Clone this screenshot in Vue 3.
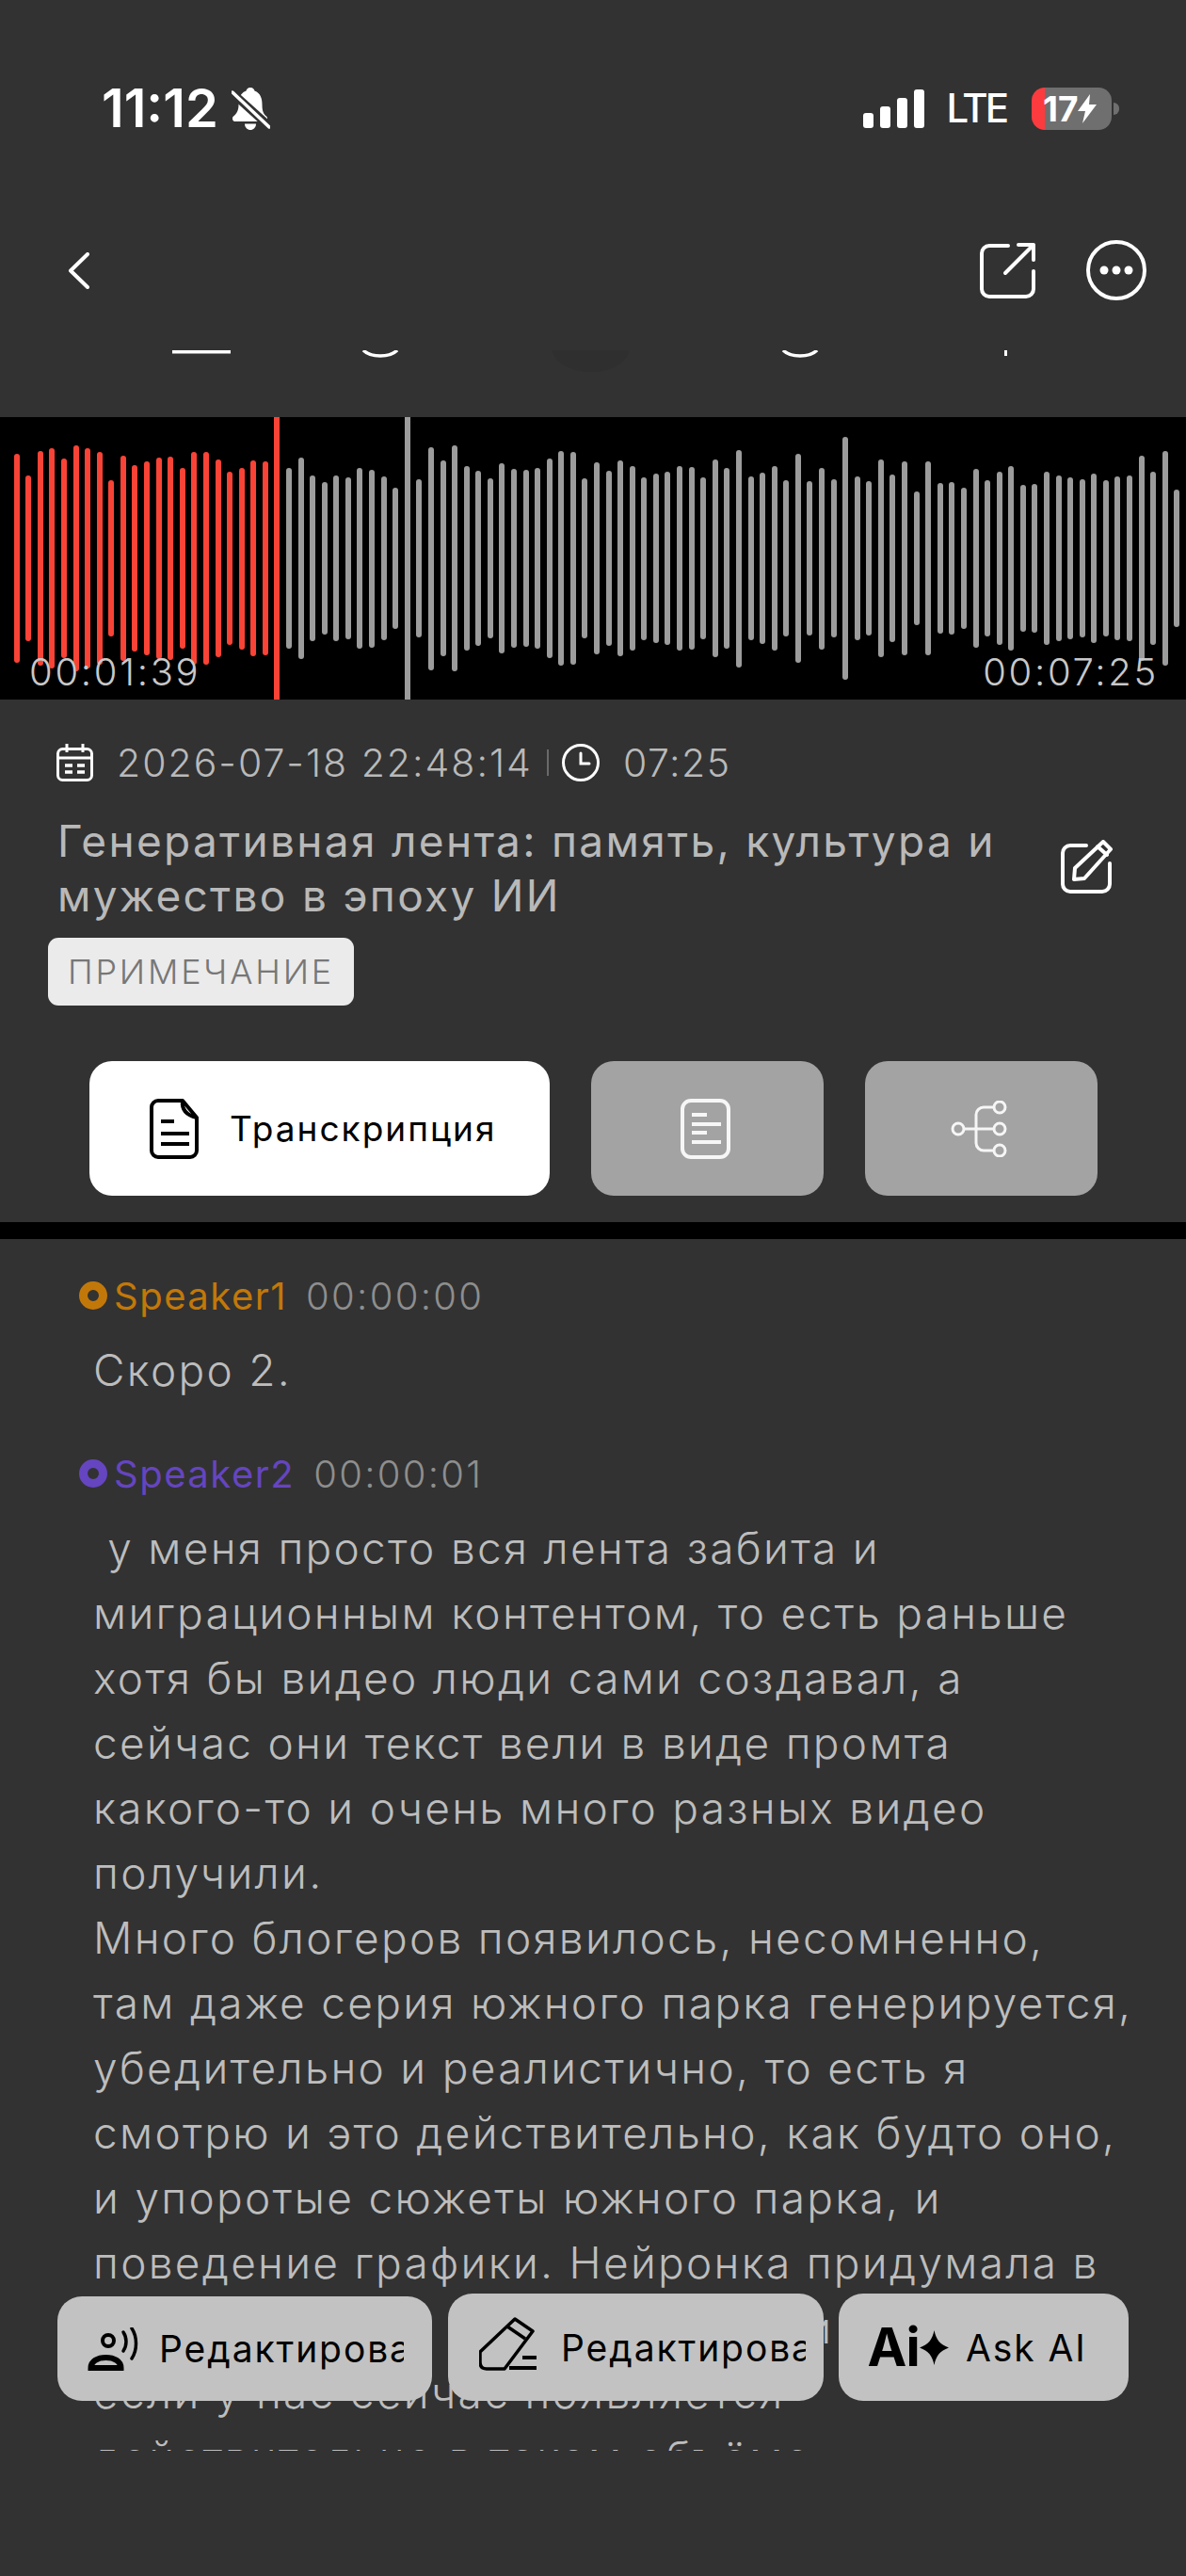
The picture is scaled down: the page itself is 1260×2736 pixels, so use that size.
<script setup>
// 波形データ（バーの高さ）
const played = [667,526,684,700,636,722,704,680,498,653,594,620,642,646,578,680,680,628,550,579,626,618]
const middle = [578,640,526,486,526,518,575,567,520,452]
const rest = [503,711,622,719,586,559,509,608,572,563,574,634,685,680,508,
  610,556,625,590,519,538,552,590,582,516,632,574,693,520,544,590,496,668,492,579,502,776,524,490,630,
  535,617,424,616,478,484,452,572,499,552,588,466,472,550,526,518,505,540,498,524,527,655,550,686,440]

const toBars = (list, kind) => list.map((h) => ({ h: h / 3, kind }))
const bars = [
  ...toBars(played, 'red'),
  { h: 300, kind: 'head' },
  ...toBars(middle, 'gray'),
  { h: 300, kind: 'line' },
  ...toBars(rest, 'gray')
]

const segments = [
  { name: 'Speaker1', time: '00:00:00', color: '#c27809', text: 'Скоро 2.' },
  {
    name: 'Speaker2',
    time: '00:00:01',
    color: '#6545c0',
    text: ` у меня просто вся лента забита и
миграционным контентом, то есть раньше
хотя бы видео люди сами создавал, а
сейчас они текст вели в виде промта
какого-то и очень много разных видео
получили.
Много блогеров появилось, несомненно,
там даже серия южного парка генерируется,
убедительно и реалистично, то есть я
смотрю и это действительно, как будто оно,
и упоротые сюжеты южного парка, и
поведение графики. Нейронка придумала в
в этом сюжете много всякого, и с
если у нас сейчас появляется
действительно в таком объёме`
  }
]
</script>

<template>
  <div class="screen">
    <header class="status">
      <div class="status-left">
        <span class="clock">11:12</span>
        <svg class="bell" viewBox="0 0 41 45">
          <path d="M20 0c-3 0-4 2-4.500 3.500C9 6 7.500 12 7.500 18c0 6-2 10-5.500 12.500C0 32 1 36 3.500 36h32c2.500 0 3.500-4 1.500-5.500C33.500 28 32.500 24 32.500 18c0-6-1.500-12-8-14.500C24 2 23 0 20 0z" fill="#fff"/>
          <path d="M14 38.500h12c0 4-3 6.500-6 6.500s-6-2.500-6-6.500z" fill="#fff"/>
          <path d="M0 5l41 37" stroke="#323232" stroke-width="9"/>
          <path d="M1 5l39 37" stroke="#fff" stroke-width="3.500" stroke-linecap="round"/>
        </svg>
      </div>
      <div class="status-right">
        <div class="signal">
          <i style="height: 16px"></i>
          <i style="height: 23px"></i>
          <i style="height: 32px"></i>
          <i style="height: 41px"></i>
        </div>
        <span class="lte">LTE</span>
        <div class="battery">
          <span>17</span>
          <svg viewBox="0 0 20 31" width="20" height="31">
            <path d="M13 0L0 18h8L5 31 20 11h-8z" fill="#fff"/>
          </svg>
        </div>
      </div>
    </header>

    <nav class="nav">
      <svg width="23" height="39" viewBox="0 0 23 39" fill="none" stroke="#fff" stroke-width="4" stroke-linecap="round" stroke-linejoin="round">
        <path d="M21 2L3 19.500 21 37"/>
      </svg>
      <div class="nav-actions">
        <svg width="60" height="61" viewBox="0 0 60 61" fill="none" stroke="#fff" stroke-width="4" stroke-linecap="round" stroke-linejoin="round">
          <path d="M30 4H10a8 8 0 0 0-8 8v38a8 8 0 0 0 8 8h39a8 8 0 0 0 8-8V31"/>
          <path d="M27 33L57 3M41 3h16v16"/>
        </svg>
        <svg width="64" height="64" viewBox="0 0 64 64">
          <circle cx="32" cy="32" r="30" fill="none" stroke="#fff" stroke-width="4"/>
          <circle cx="19" cy="32" r="4.500" fill="#fff"/>
          <circle cx="32" cy="32" r="4.500" fill="#fff"/>
          <circle cx="45" cy="32" r="4.500" fill="#fff"/>
        </svg>
      </div>
    </nav>

    <!-- スクロールで隠れたアイコンの端 -->
    <svg class="peek" viewBox="0 0 1260 71" width="1260" height="71">
      <path d="M586 0h83c-4 14-20 23-41 23s-38-9-42-23z" fill="#2f2f2f"/>
      <rect x="183" width="62" height="3.500" fill="#fff"/>
      <path d="M386 0c4 4 10 6 18 6s14-2 18-6" fill="none" stroke="#fff" stroke-width="3.500"/>
      <path d="M832 0c4 4 10 6 18 6s14-2 18-6" fill="none" stroke="#fff" stroke-width="3.500"/>
      <rect x="1067" width="3" height="6" fill="#fff"/>
    </svg>

    <section class="wave">
      <i
        v-for="(bar, index) in bars"
        :key="index"
        :class="bar.kind"
        :style="{ height: bar.h + 'px' }"
      ></i>
      <span class="wave-time left">00:01:39</span>
      <span class="wave-time right">00:07:25</span>
    </section>

    <div class="meta">
      <svg width="39" height="40" viewBox="0 0 39 40" fill="none" stroke="#fff" stroke-width="3">
        <rect x="1.500" y="5.500" width="36" height="33" rx="5"/>
        <path d="M2 15h35M11 0v9M28 0v9"/>
        <path d="M9 23h8M22 23h8M9 30h8M22 30h8" stroke-width="3.500"/>
      </svg>
      <span class="meta-date">2026-07-18 22:48:14</span>
      <i class="meta-sep"></i>
      <svg width="40" height="40" viewBox="0 0 40 40" fill="none" stroke="#fff" stroke-width="3" stroke-linecap="round">
        <circle cx="20" cy="20" r="18.500"/>
        <path d="M20 10v11h9"/>
      </svg>
      <span class="meta-dur">07:25</span>
    </div>

    <div class="title-row">
      <h1 class="title">Генеративная лента: память, культура и мужество в эпоху ИИ</h1>
      <svg class="edit" width="55" height="57" viewBox="0 0 55 57" fill="none" stroke="#fff" stroke-width="4" stroke-linecap="round" stroke-linejoin="round">
        <path d="M27 6H10a8 8 0 0 0-8 8v33a8 8 0 0 0 8 8h34a8 8 0 0 0 8-8V25"/>
        <path d="M15 30L45 2l8 8-28 31-11 1zM39 7l10 9"/>
      </svg>
    </div>

    <span class="chip">ПРИМЕЧАНИЕ</span>

    <div class="tabs">
      <button class="tab active">
        <svg width="52" height="64" viewBox="0 0 52 64" fill="none" stroke="#000" stroke-width="4" stroke-linejoin="round">
          <path d="M35 2H9a7 7 0 0 0-7 7v46a7 7 0 0 0 7 7h34a7 7 0 0 0 7-7V20z"/>
          <path d="M35 2c-1 8 2 15 15 18"/>
          <path d="M12 24h14M12 37h30M12 48h30"/>
        </svg>
        <span>Транскрипция</span>
      </button>
      <button class="tab">
        <svg class="nudge-s" width="53" height="64" viewBox="0 0 53 64" fill="none" stroke="#f6f6f6" stroke-width="4">
          <rect x="2" y="2" width="49" height="60" rx="9"/>
          <path d="M12 17h16M12 27h31M12 36h16M12 46h31"/>
        </svg>
      </button>
      <button class="tab">
        <svg class="nudge-m" width="60" height="60" viewBox="0 0 60 60" fill="none" stroke="#f6f6f6" stroke-width="3">
          <circle cx="8" cy="30" r="6"/>
          <circle cx="52" cy="7" r="6"/>
          <circle cx="52" cy="30" r="6"/>
          <circle cx="52" cy="53" r="6"/>
          <path d="M14 30h32M46 7H35a8 8 0 0 0-8 8v30a8 8 0 0 0 8 8h11"/>
        </svg>
      </button>
    </div>

    <div class="rule"></div>

    <main class="transcript">
      <article v-for="seg in segments" :key="seg.name" class="segment">
        <div class="seg-head">
          <i class="dot" :style="{ borderColor: seg.color }"></i>
          <span class="seg-name" :style="{ color: seg.color }">{{ seg.name }}</span>
          <span class="seg-time">{{ seg.time }}</span>
        </div>
        <p class="seg-text">{{ seg.text }}</p>
      </article>
    </main>

    <div class="actions">
      <button class="action first">
        <svg width="56" height="46" viewBox="0 0 56 46" fill="none" stroke="#000" stroke-linecap="round">
          <circle cx="22" cy="14" r="6" stroke-width="4"/>
          <path d="M3.500 43c0-7 7-11 16-11s16 4 16 11z" stroke-width="6"/>
          <path d="M38 5c4 6 4 14 0 20" stroke-width="3.500"/>
          <path d="M47 1c6 9 6 23 0 32" stroke-width="3.500"/>
        </svg>
        <span class="action-label">Редактировать</span>
      </button>
      <button class="action second">
        <svg class="lift" width="62" height="57" viewBox="0 0 62 57" fill="none" stroke="#000" stroke-width="3.500" stroke-linejoin="round">
          <path d="M38 2l19 13-30 40H8c-5 0-7-3-7-7V37z"/>
          <path d="M30 10l19 13"/>
          <path d="M46 43h15M32 54h29" stroke-width="4"/>
        </svg>
        <span class="action-label">Редактировать</span>
      </button>
      <button class="action third">
        <span class="ai-mark">Ai</span>
        <svg width="31" height="37" viewBox="0 0 31 37">
          <path d="M15.500 0c2 10 6 15 15.500 18.500-9.500 3.500-13.500 8.500-15.500 18.500-2-10-6-15-15.500-18.500C9.500 15 13.500 10 15.500 0z" fill="#000"/>
        </svg>
        <span class="ask">Ask AI</span>
      </button>
    </div>
  </div>
</template>

<style>
html, body {
  margin: 0;
  background: #323232;
}
</style>

<style scoped>
.screen {
  position: relative;
  width: 1260px;
  height: 2736px;
  overflow: hidden;
  background: #323232;
  font-family: Inter, "Noto Sans", sans-serif;
}

/* ===== status ===== */
.status {
  display: flex;
  justify-content: space-between;
  align-items: center;
  height: 46px;
  padding: 92px 79px 0 108px;
  color: #fff;
}
.status-left { display: flex; align-items: center; gap: 14px; }
.clock { font-size: 56px; font-weight: 600; line-height: 46px; }
.bell { width: 41px; height: 45px; }
.status-right { display: flex; align-items: center; }
.signal { display: flex; align-items: flex-end; gap: 7px; height: 41px; }
.signal i { width: 11px; background: #fff; border-radius: 3px; }
.lte { margin-left: 23px; font-size: 42px; font-weight: 500; line-height: 46px; letter-spacing: -3px; }
.battery {
  position: relative;
  display: flex;
  align-items: center;
  width: 85px;
  height: 45px;
  margin-left: 27px;
  padding-left: 12px;
  box-sizing: border-box;
  border-radius: 14px;
  background: linear-gradient(to right, #fc3b3f 14px, #6f6f6f 14px);
  font-size: 37px;
  font-weight: 700;
}
.battery::after {
  content: "";
  position: absolute;
  right: -8px;
  top: 16px;
  width: 6px;
  height: 13px;
  background: #6f6f6f;
  border-radius: 0 6px 6px 0;
}

/* ===== nav ===== */
.nav {
  display: flex;
  justify-content: space-between;
  align-items: center;
  height: 64px;
  margin-top: 117px;
  padding: 0 42px 0 72px;
}
.nav-actions { display: flex; align-items: center; gap: 53px; }
.peek { display: block; margin-top: 53px; }

/* ===== 波形 ===== */
.wave {
  position: relative;
  display: flex;
  align-items: center;
  gap: 6.590px;
  height: 300px;
  padding-left: 14.700px;
  background: #000;
  overflow: hidden;
}
.wave i { flex: none; width: 6px; border-radius: 3px; }
.wave .red { background: #f94336; }
.wave .gray { background: #9c9c9c; }
.wave .head { background: #f94336; border-radius: 0; }
.wave .line { background: #9c9c9c; border-radius: 0; }
.wave-time {
  position: absolute;
  top: 247px;
  font-size: 40px;
  font-weight: 300;
  line-height: 48px;
  letter-spacing: 2.700px;
  color: #c8c8c8;
}
.wave-time.left { left: 31px; }
.wave-time.right { right: 29px; }

/* ===== meta ===== */
.meta {
  display: flex;
  align-items: center;
  height: 40px;
  margin-top: 47px;
  padding-left: 60px;
  font-size: 41px;
  font-weight: 300;
  color: #b9b9b9;
}
.meta-date { margin-left: 25px; letter-spacing: 2px; }
.meta-sep { width: 2px; height: 28px; margin: 0 14px 0 15px; background: #6a6a6a; }
.meta-dur { margin-left: 25px; letter-spacing: 1.500px; }

.title-row {
  display: flex;
  justify-content: space-between;
  margin-top: 34px;
  padding: 0 78px 0 61px;
}
.title {
  width: 1030px;
  margin: 0;
  font-size: 46px;
  font-weight: 400;
  line-height: 58px;
  letter-spacing: 2.300px;
  color: #b9b9b9;
}
.edit { flex: none; margin-top: 28px; }

.chip {
  display: block;
  box-sizing: border-box;
  width: 325px;
  height: 72px;
  margin: 16px 0 0 51px;
  border-radius: 11px;
  background: #ebebeb;
  color: #777;
  font-size: 36px;
  font-weight: 300;
  line-height: 72px;
  letter-spacing: 2.800px;
  text-align: center;
}

/* ===== tabs ===== */
.tabs {
  display: flex;
  gap: 44px;
  margin-top: 59px;
  padding-left: 95px;
}
.tab {
  display: flex;
  align-items: center;
  justify-content: center;
  width: 247px;
  height: 143px;
  padding: 0;
  border: 0;
  border-radius: 24px;
  background: #a3a3a3;
  font-family: inherit;
}
.tab.active {
  justify-content: flex-start;
  gap: 33px;
  width: 489px;
  padding-left: 64px;
  box-sizing: border-box;
  background: #fff;
  color: #000;
  font-size: 37px;
  letter-spacing: 2px;
}
.nudge-s { margin-right: 4px; }
.nudge-m { margin-right: 5px; }
.rule { height: 18px; margin-top: 28px; background: #000; }

/* ===== transcript ===== */
.transcript {
  height: 1287px;
  padding: 40px 0 0 84px;
  box-sizing: border-box;
  overflow: hidden;
}
.segment { margin-bottom: 55px; }
.seg-head {
  display: flex;
  align-items: center;
  height: 40px;
  font-size: 40px;
  font-weight: 300;
  letter-spacing: 1.500px;
}
.dot {
  box-sizing: border-box;
  width: 30px;
  height: 30px;
  margin-right: 7px;
  border: 9px solid;
  border-radius: 50%;
}
.seg-name { font-weight: 400; }
.seg-time { margin-left: 20px; color: #8e8e8e; letter-spacing: 2.300px; }
.seg-text {
  margin: 25px 0 0 15px;
  font-size: 46px;
  font-weight: 300;
  line-height: 69px;
  letter-spacing: 2.300px;
  white-space: pre;
  color: #bdbdbd;
}

/* ===== bottom actions ===== */
.actions {
  position: absolute;
  left: 61px;
  bottom: 186px;
  display: flex;
  align-items: flex-end;
  gap: 17px;
}
.action {
  display: flex;
  align-items: center;
  box-sizing: border-box;
  height: 114px;
  padding: 0;
  border: 0;
  border-radius: 26px;
  background: #c2c2c2;
  color: #000;
  font-family: inherit;
  font-size: 39px;
  letter-spacing: 1.900px;
}
.action.first { width: 398px; height: 111px; padding-left: 32px; gap: 20px; }
.action.second { width: 399px; padding-left: 33px; gap: 25px; margin-right: -1px; }
.action.third { width: 308px; padding-left: 30px; }
.lift { margin-top: -8px; }
.action-label { display: block; width: 260px; overflow: hidden; white-space: nowrap; text-align: left; }
.ai-mark { width: 56px; font-size: 56px; font-weight: 700; line-height: 56px; letter-spacing: -1px; }
.ask { margin-left: 18px; }
</style>
